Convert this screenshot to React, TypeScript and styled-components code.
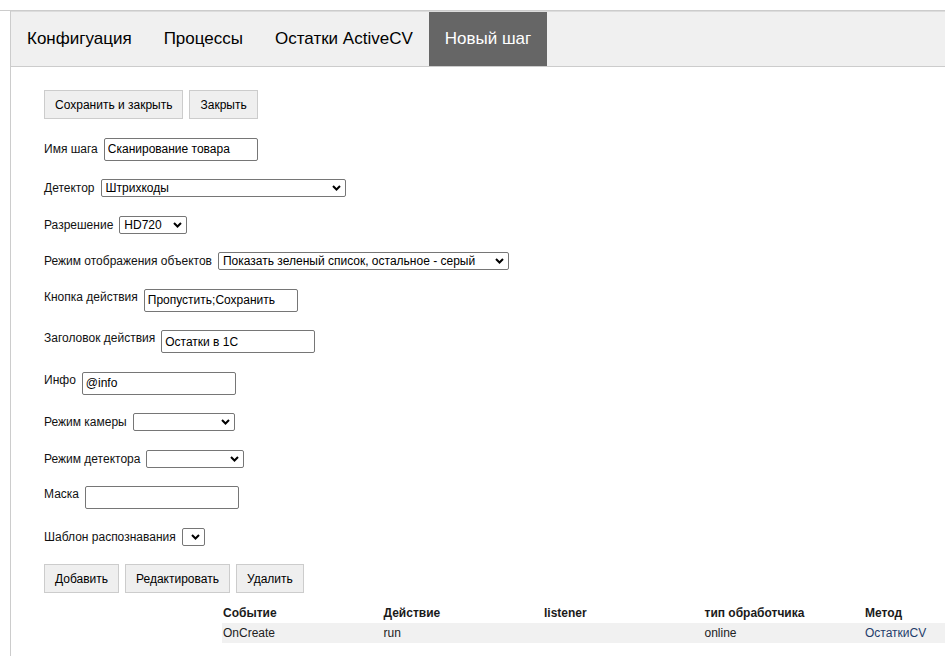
import { FC } from "react";
import styled, { createGlobalStyle } from "styled-components";

const TABS = [
  { id: 1, title: "Конфигуация" },
  { id: 2, title: "Процессы" },
  { id: 3, title: "Остатки ActiveCV" },
  { id: 4, title: "Новый шаг", active: true },
];

const HANDLERS = [
  { id: 1, event: "OnCreate", action: "run", listener: "", type: "online", method: "ОстаткиCV" },
];

const GlobalStyle = createGlobalStyle`
  html, body {
    margin: 0;
    padding: 0;
    background: #fff;
    overflow: hidden;
  }
  body {
    font-family: "Liberation Sans", Arial, sans-serif;
    font-size: 12px;
    color: #000;
  }
`;

const Page = styled("div")`
  margin-top: 10px;
  border-top: 1px solid #cccccc;
  height: 645px;
`;

const Panel = styled("div")`
  margin-left: 10px;
  border-left: 1px solid #cccccc;
  height: 100%;
`;

const TabBar = styled("div")`
  display: flex;
  height: 54px;
  background: #f0f0f0;
  border-top: 1px solid #dcdcdc;
  border-bottom: 1px solid #cccccc;
`;

const Tab = styled("div")<{ $active?: boolean }>`
  display: flex;
  align-items: center;
  padding: 0 16px;
  font-size: 17px;
  color: ${(p) => (p.$active ? "#fff" : "#000")};
  background: ${(p) => (p.$active ? "#666666" : "transparent")};
`;

const Content = styled("div")`
  padding: 23px 0 0 33px;
  display: flex;
  flex-direction: column;
  gap: 18.5px;
`;

const ButtonRow = styled("div")`
  display: flex;
  gap: 6px;
`;

const Button = styled("button")`
  height: 29px;
  padding: 0 10px;
  font-family: inherit;
  font-size: 12px;
  color: #000;
  background: #efefef;
  border: 1px solid #cccccc;
  border-radius: 0;
`;

const Row = styled("div")<{ $top?: boolean }>`
  display: flex;
  align-items: ${(p) => (p.$top ? "flex-start" : "center")};
  gap: 6px;
`;

const Label = styled("span")`
  line-height: 16px;
  color: #111;
`;

const TextInput = styled("input")`
  box-sizing: border-box;
  width: 154px;
  height: 23px;
  padding: 0 3px;
  font-family: inherit;
  font-size: 12px;
  color: #000;
  border: 1px solid #767676;
  border-radius: 2px;
  outline: none;
`;

const SelectWrap = styled("div")<{ $w: number }>`
  position: relative;
  width: ${(p) => p.$w}px;
  height: 18px;
`;

const Select = styled("select")`
  appearance: none;
  box-sizing: border-box;
  width: 100%;
  height: 100%;
  padding: 0 0 0 4px;
  font-family: inherit;
  font-size: 12px;
  color: #000;
  background: #fff;
  border: 1px solid #767676;
  border-radius: 2px;
  outline: none;
`;

const Chevron = styled("svg")`
  position: absolute;
  right: 5px;
  top: 6px;
  pointer-events: none;
`;

const TableBox = styled("div")`
  margin: -7.5px 0 0 178px;
  overflow: hidden;
`;

const Table = styled("table")`
  border-collapse: collapse;
  table-layout: fixed;
  width: 802.5px;
`;

const Th = styled("th")`
  width: 158.5px;
  padding: 0 1px 2px;
  height: 17px;
  text-align: left;
  font-weight: bold;
  font-size: 12px;
  color: #1a1a1a;
`;

const Td = styled("td")<{ $link?: boolean }>`
  padding: 0 1px;
  height: 20px;
  font-size: 12px;
  color: ${(p) => (p.$link ? "#1f3c6b" : "#222")};
`;

const Tr = styled("tr")`
  background: #f1f1f1;
`;

const Dropdown: FC<{ width: number; value?: string }> = ({ width, value }) => (
  <SelectWrap $w={width}>
    <Select defaultValue={value ?? ""}>
      <option value={value ?? ""}>{value ?? ""}</option>
    </Select>
    <Chevron width="9" height="6" viewBox="0 0 9 6">
      <path d="M1 1 L4.5 4.5 L8 1" fill="none" stroke="#000" strokeWidth="2" />
    </Chevron>
  </SelectWrap>
);

export default function App() {
  return (
    <>
      <GlobalStyle />
      <Page>
        <Panel>
          <TabBar>
            {TABS.map((t) => (
              <Tab key={t.id} $active={t.active}>
                {t.title}
              </Tab>
            ))}
          </TabBar>
          <Content>
            <ButtonRow>
              <Button>Сохранить и закрыть</Button>
              <Button>Закрыть</Button>
            </ButtonRow>
            <Row>
              <Label>Имя шага</Label>
              <TextInput defaultValue="Сканирование товара" />
            </Row>
            <Row>
              <Label>Детектор</Label>
              <Dropdown width={245} value="Штрихкоды" />
            </Row>
            <Row>
              <Label>Разрешение</Label>
              <Dropdown width={68} value="HD720" />
            </Row>
            <Row>
              <Label>Режим отображения объектов</Label>
              <Dropdown width={291} value="Показать зеленый список, остальное - серый" />
            </Row>
            <Row $top>
              <Label>Кнопка действия</Label>
              <TextInput defaultValue="Пропустить;Сохранить" />
            </Row>
            <Row $top>
              <Label>Заголовок действия</Label>
              <TextInput defaultValue="Остатки в 1С" />
            </Row>
            <Row $top>
              <Label>Инфо</Label>
              <TextInput defaultValue="@info" />
            </Row>
            <Row>
              <Label>Режим камеры</Label>
              <Dropdown width={102} />
            </Row>
            <Row>
              <Label>Режим детектора</Label>
              <Dropdown width={98} />
            </Row>
            <Row $top>
              <Label>Маска</Label>
              <TextInput />
            </Row>
            <Row>
              <Label>Шаблон распознавания</Label>
              <Dropdown width={23} />
            </Row>
            <ButtonRow>
              <Button>Добавить</Button>
              <Button>Редактировать</Button>
              <Button>Удалить</Button>
            </ButtonRow>
            <TableBox>
              <Table>
                <thead>
                  <tr>
                    <Th>Событие</Th>
                    <Th>Действие</Th>
                    <Th>listener</Th>
                    <Th>тип обработчика</Th>
                    <Th>Метод</Th>
                  </tr>
                </thead>
                <tbody>
                  {HANDLERS.map((h) => (
                    <Tr key={h.id}>
                      <Td>{h.event}</Td>
                      <Td>{h.action}</Td>
                      <Td>{h.listener}</Td>
                      <Td>{h.type}</Td>
                      <Td $link>{h.method}</Td>
                    </Tr>
                  ))}
                </tbody>
              </Table>
            </TableBox>
          </Content>
        </Panel>
      </Page>
    </>
  );
}
